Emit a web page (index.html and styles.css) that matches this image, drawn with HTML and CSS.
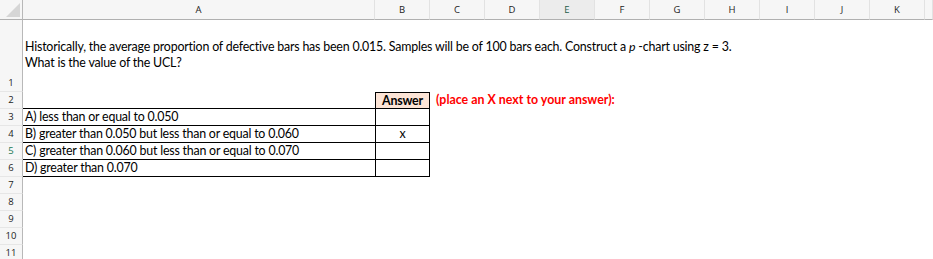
FILE: index.html
```html
<!DOCTYPE html>
<html lang="en">
<head>
    <meta charset="UTF-8">
    <title>p-chart question</title>
<link rel="stylesheet" href="styles.css">
</head>
<body>
    <div class="sheet">
        <div class="corner"><svg width="14" height="14" viewBox="0 0 14 14"><polygon points="14,0 14,14 0,14" fill="#d6d6d6"/></svg></div>
        <div class="colhead">A</div>
        <div class="colhead">B</div>
        <div class="colhead">C</div>
        <div class="colhead">D</div>
        <div class="colhead active">E</div>
        <div class="colhead">F</div>
        <div class="colhead">G</div>
        <div class="colhead">H</div>
        <div class="colhead">I</div>
        <div class="colhead">J</div>
        <div class="colhead">K</div>
        <div class="colhead"></div>

        <!-- row 1 -->
        <div class="rowhead">1</div>
        <div class="cell question">Historically, the average proportion of defective bars has been 0.015. Samples will be of 100 bars each. Construct a <i>p</i> -chart using z = 3.<br>What is the value of the UCL?</div>

        <!-- row 2 -->
        <div class="rowhead">2</div>
        <div class="cell bb"></div>
        <div class="cell answer-head">Answer</div>
        <div class="cell note">(place an X next to your answer):</div>

        <!-- row 3 -->
        <div class="rowhead">3</div>
        <div class="cell bb">A) less than or equal to 0.050</div>
        <div class="cell answer"></div>
        <div class="cell span-rest"></div>

        <!-- row 4 -->
        <div class="rowhead">4</div>
        <div class="cell bb">B) greater than 0.050 but less than or equal to 0.060</div>
        <div class="cell answer">x</div>
        <div class="cell span-rest"></div>

        <!-- row 5 -->
        <div class="rowhead active">5</div>
        <div class="cell bb">C) greater than 0.060 but less than or equal to 0.070</div>
        <div class="cell answer"></div>
        <div class="cell span-rest"></div>

        <!-- row 6 -->
        <div class="rowhead">6</div>
        <div class="cell bb">D) greater than 0.070</div>
        <div class="cell answer"></div>
        <div class="cell span-rest"></div>

        <div class="rowhead">7</div>
        <div class="cell span-all"></div>
        <div class="rowhead">8</div>
        <div class="cell span-all"></div>
        <div class="rowhead">9</div>
        <div class="cell span-all"></div>
        <div class="rowhead">10</div>
        <div class="cell span-all"></div>
        <div class="rowhead">11</div>
        <div class="cell span-all"></div>
    </div>
</body>
</html>
```

FILE: styles.css
```css
* {
    box-sizing: border-box;
}

body {
    margin: 0;
    background-color: #fff;
    color: #000;
    font-family: Lato, "Open Sans", sans-serif;
    overflow: hidden;
}

.sheet {
    display: grid;
    grid-template-columns: 23px 352px repeat(10, 55px) 1fr;
    grid-template-rows: 20px 72px repeat(10, 17px);
    width: 933px;
}

.corner {
    background-color: #f6f6f6;
    border-right: 1px solid #b8b8b8;
    border-bottom: 1px solid #b0b0b0;
    display: flex;
    align-items: flex-end;
    justify-content: flex-end;
    padding: 0 2px 2px 0;
}

.colhead {
    background-color: #f6f6f6;
    border-right: 1px solid #e2e2e2;
    border-bottom: 1px solid #b0b0b0;
    font-family: "Open Sans", sans-serif;
    font-size: 9.5px;
    color: #222;
    display: flex;
    align-items: center;
    justify-content: center;
}

.colhead.active {
    background-color: #ececec;
    color: #1d5d4a;
}

.rowhead {
    background-color: #f6f6f6;
    border-right: 1px solid #b8b8b8;
    border-bottom: 1px solid #e6e6e6;
    font-family: "Open Sans", sans-serif;
    font-size: 9.5px;
    color: #222;
    display: flex;
    align-items: flex-end;
    justify-content: center;
    padding-bottom: 1px;
    line-height: 14px;
}

.rowhead.active {
    color: #1d7a55;
}

.cell {
    font-size: 12.4px;
    line-height: 16px;
    white-space: nowrap;
    padding: 0 2px;
    letter-spacing: -0.2px;
}

.question {
    grid-column: 2 / -1;
    padding-top: 19px;
    letter-spacing: -0.19px;
}

.question i {
    font-style: italic;
}

.span-rest {
    grid-column: 4 / -1;
}

.span-all {
    grid-column: 2 / -1;
}

.bb {
    border-bottom: 1px solid #000;
}

.answer-head {
    background-color: #fce4d6;
    border: 1px solid #000;
    font-weight: bold;
    text-align: center;
    line-height: 15px;
}

.answer {
    border-left: 1px solid #000;
    border-right: 1px solid #000;
    border-bottom: 1px solid #000;
    text-align: center;
}

.note {
    grid-column: 4 / -1;
    color: #f00;
    font-weight: bold;
    padding-left: 6px;
    letter-spacing: 0;
}
```
